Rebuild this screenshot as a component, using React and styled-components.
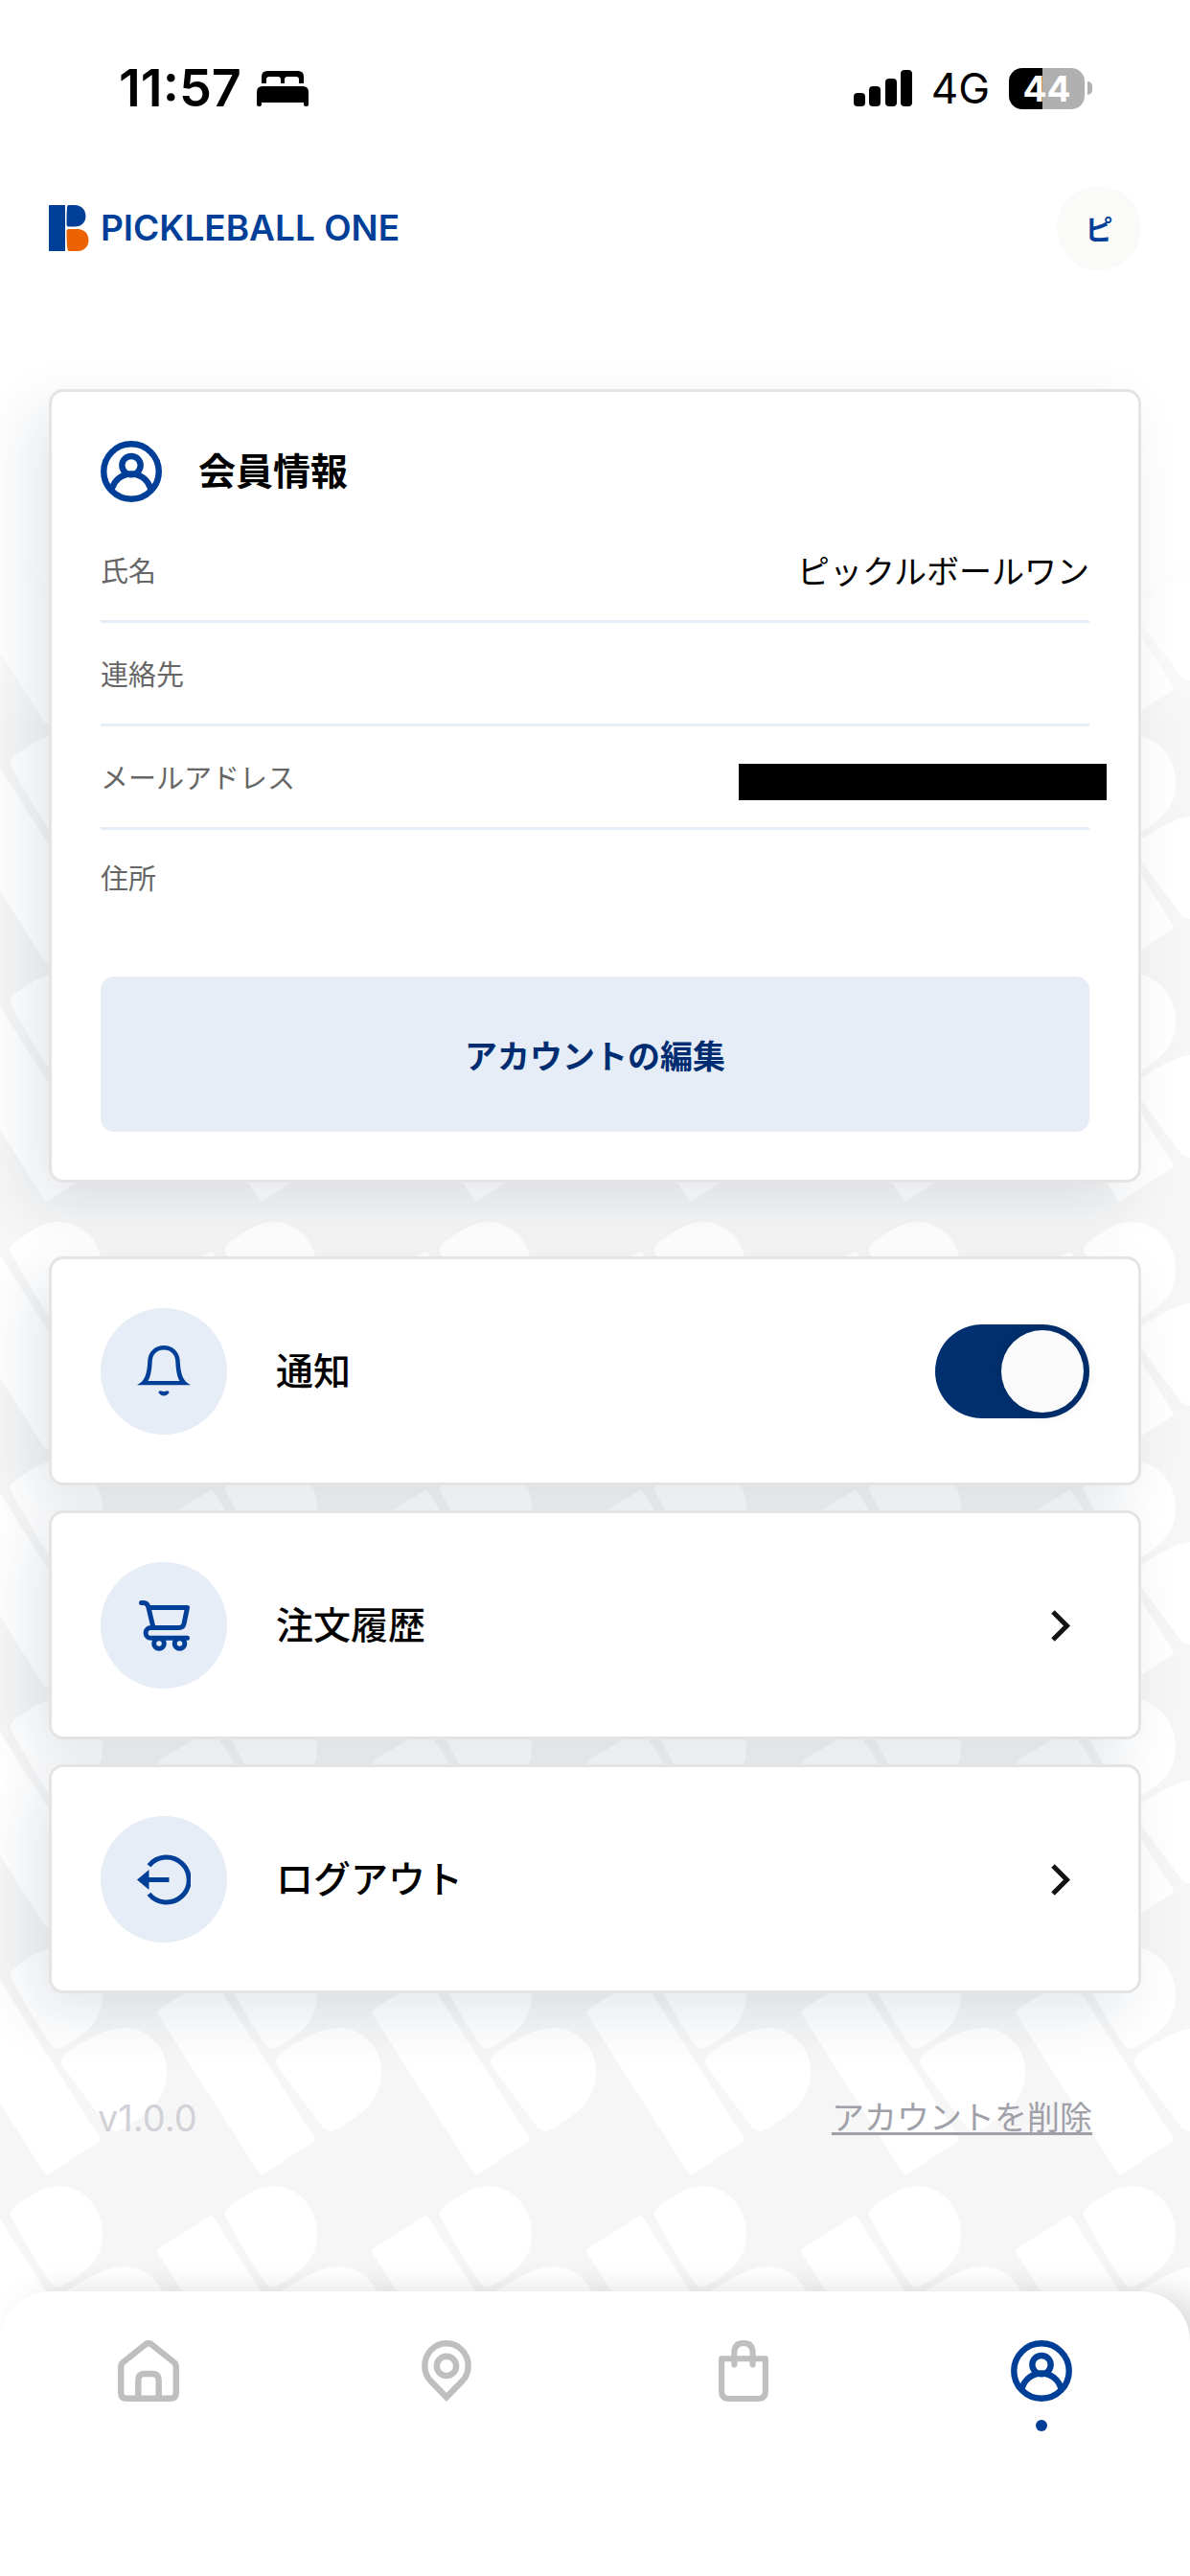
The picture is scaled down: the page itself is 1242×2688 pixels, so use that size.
import { useState } from 'react';
import styled, { createGlobalStyle } from 'styled-components';

const BLUE = '#003f98';
const NAVY = '#002d72';

const patternRow = `
    <path d='M-106 -173L-55 -205Q-52 -207 -50 -204L55 -39Q57 -36 54 -34L3 -1Q0 1 -3 -2L-108 -167Q-110 -170 -106 -173Z'/>
    <path d='M-33 -216C-18 -227 -4 -237 13 -237C38 -237 58 -214 58 -188C58 -160 42 -148 17 -133Q10 -129 4 -136C-10 -156 -24 -180 -37 -204Q-41 -210 -33 -216Z'/>
    <path d='M20 -127C38 -138 60 -153 81 -153C106 -153 125 -132 125 -107C125 -76 103 -62 79 -47Q70 -42 64 -49C48 -70 32 -92 17 -112Q12 -120 20 -127Z'/>
`;

// three rows of the brand mark per tile, drawn again on each side so the shapes wrap
const patternTile = `<svg xmlns='http://www.w3.org/2000/svg' width='224' height='757'><g fill='#ffffff'>${[245, 494, 743]
    .map((y) => [-175, 49, 273].map((x) => `<g transform='translate(${x} ${y})'>${patternRow}</g>`).join(''))
    .join('')}</g></svg>`;

const patternUrl = `url("data:image/svg+xml,${encodeURIComponent(patternTile)}")`;

const GlobalStyle = createGlobalStyle`
    * {
        box-sizing: border-box;
    }

    body {
        margin: 0;
        font-family: Inter, 'Noto Sans CJK JP', sans-serif;
        color: #000;
        background: #fff;
    }

    button {
        border: 0;
        font-family: inherit;
        cursor: pointer;
    }
`;

const PageStyled = styled.div`
    display: flex;
    flex-direction: column;
    min-height: 100vh;
    overflow: hidden;
    background-color: #f6f6f6;
    background-image: linear-gradient(#fff 580px, rgba(255, 255, 255, 0) 760px), ${patternUrl};
    background-repeat: no-repeat, repeat;
    background-position: 0 0, 0 510px;
`;

const StatusBarStyled = styled.div`
    display: flex;
    justify-content: space-between;
    align-items: center;
    height: 184px;
    padding: 0 102px 0 124px;
`;

const StatusGroupStyled = styled.div`
    display: flex;
    align-items: center;
    gap: ${({ $gap }) => $gap}px;
`;

const TimeStyled = styled.span`
    font-size: 54px;
    line-height: 64px;
    font-weight: 600;
`;

const NetworkStyled = styled.span`
    font-size: 44px;
    line-height: 52px;
`;

const BatteryStyled = styled.div`
    display: flex;
    align-items: center;
    gap: 3px;

    &::after {
        content: '';
        width: 5px;
        height: 14px;
        border-radius: 0 7px 7px 0;
        background: #b0b0b0;
    }
`;

const BatteryLevelStyled = styled.span`
    width: 79px;
    border-radius: 14px;
    font-size: 37px;
    line-height: 43px;
    font-weight: 700;
    text-align: center;
    color: #fff;
    background: linear-gradient(90deg, #000 44%, #b0b0b0 44%);
`;

const HeaderStyled = styled.header`
    display: flex;
    justify-content: space-between;
    align-items: center;
    margin-top: 10px;
    padding: 0 51px;
`;

const BrandStyled = styled.a`
    display: flex;
    align-items: center;
    gap: 12px;
    font-size: 37px;
    line-height: 48px;
    font-weight: 600;
    color: ${BLUE};
    text-decoration: none;
`;

const AvatarStyled = styled.button`
    width: 88px;
    height: 88px;
    padding: 0;
    border-radius: 50%;
    font-size: 29px;
    font-weight: 700;
    color: ${BLUE};
    background: #fafaf9;
`;

const MainStyled = styled.main`
    padding: 124px 51px 0;
`;

const CardStyled = styled.section`
    padding: 51px 51px 50px;
    border: 3px solid #e4e4e4;
    border-radius: 15px;
    background: #fff;
    box-shadow: -18px 22px 60px rgba(16, 40, 72, 0.11);
`;

const CardHeaderStyled = styled.div`
    display: flex;
    align-items: center;
    gap: 38px;
    margin-bottom: 18px;
`;

const TitleIconStyled = styled.span`
    display: flex;
    color: ${BLUE};
`;

const CardTitleStyled = styled.h1`
    margin: 0;
    font-size: 39px;
    line-height: 56px;
    font-weight: 700;
`;

const InfoListStyled = styled.dl`
    margin: 0 0 53px;
`;

const InfoRowStyled = styled.div`
    display: flex;
    justify-content: space-between;
    align-items: center;
    height: 108px;
    padding-top: 4px;
    border-bottom: 3px solid #e6edf6;

    &:last-child {
        height: 100px;
        border-bottom: 0;
    }
`;

const InfoLabelStyled = styled.dt`
    font-size: 29px;
    line-height: 40px;
    color: #666;
`;

const InfoValueStyled = styled.dd`
    margin: 0;
    font-size: 34px;
    line-height: 48px;
`;

const RedactedStyled = styled.span`
    display: block;
    width: 384px;
    height: 38px;
    margin: 6px -18px 0 0;
    background: #000;
`;

const EditButtonStyled = styled.button`
    display: block;
    width: 100%;
    height: 162px;
    border-radius: 14px;
    font-size: 34px;
    font-weight: 700;
    color: ${NAVY};
    background: #e6edf6;
`;

const MenuStyled = styled.div`
    display: flex;
    flex-direction: column;
    gap: 26px;
    margin-top: 77px;
`;

const MenuItemStyled = styled(CardStyled)`
    display: flex;
    align-items: center;
    width: 100%;
    gap: 51px;
    text-align: left;
`;

const IconCircleStyled = styled.span`
    display: flex;
    justify-content: center;
    align-items: center;
    width: 132px;
    height: 132px;
    border-radius: 50%;
    background: #e6edf6;
`;

const MenuLabelStyled = styled.span`
    flex: 1;
    font-size: 39px;
    line-height: 56px;
    font-weight: 500;
    color: #000;
`;

const ChevronStyled = styled.svg`
    margin-right: 20px;
`;

const SwitchStyled = styled.input`
    display: flex;
    align-items: center;
    justify-content: ${({ checked }) => (checked ? 'flex-end' : 'flex-start')};
    width: 161px;
    height: 98px;
    margin: 0;
    padding: 6px;
    appearance: none;
    border-radius: 49px;
    background: ${({ checked }) => (checked ? '#00306f' : '#c4c4c4')};
    cursor: pointer;

    &::before {
        content: '';
        width: 86px;
        height: 86px;
        border-radius: 50%;
        background: #fafafa;
        box-shadow: 0 0 16px rgba(0, 0, 0, 0.15);
    }
`;

const FooterStyled = styled.footer`
    display: flex;
    justify-content: space-between;
    align-items: center;
    margin-top: 104px;
    padding: 0 51px;
`;

const VersionStyled = styled.span`
    font-size: 38px;
    line-height: 52px;
    color: #d1d1d6;
`;

const DeleteLinkStyled = styled.a`
    font-size: 34px;
    line-height: 52px;
    color: #a0a0a8;
    text-underline-offset: 3px;
`;

const TabBarStyled = styled.nav`
    display: grid;
    grid-template-columns: repeat(4, 1fr);
    height: 297px;
    margin-top: auto;
    padding-top: 51px;
    border-radius: 52px 52px 0 0;
    background: #fff;
    box-shadow: 20px 4px 36px rgba(0, 0, 0, 0.16);
`;

const TabStyled = styled.a`
    display: flex;
    flex-direction: column;
    align-items: center;
    gap: 19px;
    color: ${({ $active }) => ($active ? BLUE : '#bfbfbf')};

    &::after {
        content: '';
        width: 12px;
        height: 12px;
        border-radius: 50%;
        background: ${({ $active }) => ($active ? BLUE : 'transparent')};
    }
`;

const BedIcon = () => (
    <svg width="54" height="37" viewBox="0 0 54 37">
        <path d="M5 13V6q0-6 6-6h32q6 0 6 6v7h-5V9q0-3-3-3H32q-3 0-3 3v4h-4V9q0-3-3-3H13q-3 0-3 3v4Z" />
        <path d="M0 22q0-6 6-6h42q6 0 6 6v13q0 2-2 2h-1q-2 0-2-2v-2H5v2q0 2-2 2H2q-2 0-2-2Z" />
    </svg>
);

const SignalIcon = () => (
    <svg width="61" height="38" viewBox="0 0 61 38">
        <rect x="0" y="24" width="12" height="14" rx="4" />
        <rect x="16" y="17" width="12" height="21" rx="4" />
        <rect x="33" y="9" width="12" height="29" rx="4" />
        <rect x="49" y="0" width="12" height="38" rx="4" />
    </svg>
);

const LogoMark = () => (
    <svg width="42" height="48" viewBox="0 0 42 48">
        <path fill={BLUE} d="M0 0h17v48H0z" />
        <path fill={BLUE} d="M20.5 0H27c7 0 11.500 5 11.500 11.500S34 22.500 27 22.500h-6.500q-2 0-2-2c0-6 0-12 .5-18.500q0-2 1.500-2Z" />
        <path fill="#ec6200" d="M20.500 25H30c7 0 11.500 5 11.500 11.500S37 48 30 48h-9q-1.500 0-1.500-2c-1-6-1-13-1-19q0-2 2-2Z" />
    </svg>
);

const ProfileIcon = () => (
    <svg width="64" height="64" viewBox="0 0 63 63" fill="none" stroke="currentColor" strokeWidth="6.3">
        <circle cx="31.5" cy="31.5" r="28.3" />
        <circle cx="31.5" cy="25.2" r="9.5" />
        <path d="M11.5 50a20.5 20.5 0 0 1 40 0" />
    </svg>
);

const HomeIcon = () => (
    <svg width="64" height="64" viewBox="0 0 63 63" fill="none" stroke="currentColor" strokeWidth="6.3">
        <path d="M3.2 27.5q0-3 2.300-5L28.500 4.200q3-2.200 6 0l23 18.300q2.300 2 2.300 5V53.800q0 6-6 6H9.200q-6 0-6-6Z" />
        <path d="M21 59.8V41q0-6.500 6.500-6.500h8q6.500 0 6.500 6.500v18.800" />
    </svg>
);

const PinIcon = () => (
    <svg width="52" height="64" viewBox="0 0 51 63" fill="none" stroke="currentColor" strokeWidth="6.3">
        <path d="M25.5 58.500 9.500 42C5.500 38 3.200 32.500 3.200 26.500 3.200 13.500 13 3.200 25.500 3.200S47.800 13.500 47.800 26.500c0 6-2.300 11.500-6.300 15.500Z" />
        <circle cx="25.5" cy="26.5" r="10" />
    </svg>
);

const BagIcon = () => (
    <svg
        width="52"
        height="64"
        viewBox="0 0 51 63"
        fill="none"
        stroke="currentColor"
        strokeWidth="6"
        strokeLinecap="round"
        strokeLinejoin="round"
    >
        <path d="M3 19h45v34q0 7-7 7H10q-7 0-7-7Z" />
        <path d="M16 25V13q0-10 9.500-10T35 13v12" />
    </svg>
);

const BellIcon = () => (
    <svg width="56" height="54" viewBox="0 0 56 54" fill={BLUE}>
        <path
            fillRule="evenodd"
            d="M0 41.300C8 37 10.500 31 11.300 15.500 12 6.500 18.500 0 28 0s16 6.500 16.700 15.500C45.500 31 48 37 56 41.300ZM11.500 37h33c-3-5-3.800-12-4.300-21C39.700 9 35 4.500 28 4.500S16.300 9 15.800 16c-.5 9-1.300 16-4.300 21Z"
        />
        <path d="M24.5 47.300q3.500 1.500 7 0 3 .5 1.500 2.700-5 5-10 0-1.500-2.200 1.500-2.700Z" />
    </svg>
);

const CartIcon = () => (
    <svg
        width="53"
        height="53"
        viewBox="0 0 53 53"
        fill="none"
        stroke={BLUE}
        strokeWidth="5"
        strokeLinecap="round"
        strokeLinejoin="round"
    >
        <path d="M2.5 2.500H5q4 0 5 5h40.500L47 24.500q-1 4-5 4H12.500a5.400 5.400 0 0 0 0 10.800h38M10 7.500l5 21" />
        <circle cx="21" cy="45" r="5.3" />
        <circle cx="42.5" cy="45" r="5.3" />
    </svg>
);

const LogoutIcon = () => (
    <svg width="56" height="53" viewBox="0 0 56 53" fill="none" stroke={BLUE} strokeWidth="5">
        <path d="M12.5 11.700a23.500 23.500 0 1 1 0 29.600" />
        <path d="M12 26.500h21.500" />
        <path d="M0 26.500 12.500 16v21Z" fill={BLUE} stroke="none" />
    </svg>
);

const ChevronIcon = () => (
    <ChevronStyled width="20" height="33" viewBox="0 0 20 33" fill="none" stroke="#101214" strokeWidth="5">
        <path d="M2 2l14.500 14.500L2 31" />
    </ChevronStyled>
);

const info = [
    { label: '氏名', value: 'ピックルボールワン' },
    { label: '連絡先', value: '' },
    { label: 'メールアドレス', value: <RedactedStyled /> },
    { label: '住所', value: '' },
];

const links = [
    { label: '注文履歴', icon: <CartIcon /> },
    { label: 'ログアウト', icon: <LogoutIcon /> },
];

const tabs = [
    { name: 'ホーム', href: '#home', icon: <HomeIcon /> },
    { name: 'コート', href: '#courts', icon: <PinIcon /> },
    { name: 'ショップ', href: '#shop', icon: <BagIcon /> },
    { name: 'アカウント', href: '#account', icon: <ProfileIcon />, active: true },
];

function App() {
    const [notify, setNotify] = useState(true);

    return (
        <>
            <GlobalStyle />
            <PageStyled>
                <StatusBarStyled>
                    <StatusGroupStyled $gap={16}>
                        <TimeStyled>11:57</TimeStyled>
                        <BedIcon />
                    </StatusGroupStyled>
                    <StatusGroupStyled $gap={20}>
                        <SignalIcon />
                        <NetworkStyled>4G</NetworkStyled>
                        <BatteryStyled>
                            <BatteryLevelStyled>44</BatteryLevelStyled>
                        </BatteryStyled>
                    </StatusGroupStyled>
                </StatusBarStyled>

                <HeaderStyled>
                    <BrandStyled href="#home">
                        <LogoMark />
                        PICKLEBALL ONE
                    </BrandStyled>
                    <AvatarStyled type="button">ピ</AvatarStyled>
                </HeaderStyled>

                <MainStyled>
                    <CardStyled>
                        <CardHeaderStyled>
                            <TitleIconStyled>
                                <ProfileIcon />
                            </TitleIconStyled>
                            <CardTitleStyled>会員情報</CardTitleStyled>
                        </CardHeaderStyled>
                        <InfoListStyled>
                            {info.map((item) => (
                                <InfoRowStyled key={item.label}>
                                    <InfoLabelStyled>{item.label}</InfoLabelStyled>
                                    <InfoValueStyled>{item.value}</InfoValueStyled>
                                </InfoRowStyled>
                            ))}
                        </InfoListStyled>
                        <EditButtonStyled type="button">アカウントの編集</EditButtonStyled>
                    </CardStyled>

                    <MenuStyled>
                        <MenuItemStyled as="div">
                            <IconCircleStyled>
                                <BellIcon />
                            </IconCircleStyled>
                            <MenuLabelStyled as="label" htmlFor="notify">
                                通知
                            </MenuLabelStyled>
                            <SwitchStyled
                                id="notify"
                                type="checkbox"
                                role="switch"
                                checked={notify}
                                onChange={(e) => setNotify(e.target.checked)}
                            />
                        </MenuItemStyled>
                        {links.map((item) => (
                            <MenuItemStyled as="button" type="button" key={item.label}>
                                <IconCircleStyled>{item.icon}</IconCircleStyled>
                                <MenuLabelStyled>{item.label}</MenuLabelStyled>
                                <ChevronIcon />
                            </MenuItemStyled>
                        ))}
                    </MenuStyled>

                    <FooterStyled>
                        <VersionStyled>v1.0.0</VersionStyled>
                        <DeleteLinkStyled href="#delete">アカウントを削除</DeleteLinkStyled>
                    </FooterStyled>
                </MainStyled>

                <TabBarStyled>
                    {tabs.map((tab) => (
                        <TabStyled key={tab.name} href={tab.href} aria-label={tab.name} $active={tab.active}>
                            {tab.icon}
                        </TabStyled>
                    ))}
                </TabBarStyled>
            </PageStyled>
        </>
    );
}

export default App;
